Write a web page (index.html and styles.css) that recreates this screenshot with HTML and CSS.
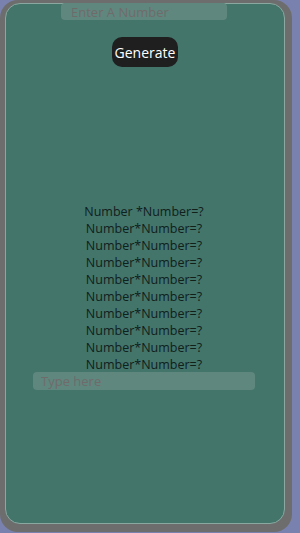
FILE: index.html
```html
<!DOCTYPE html>
<html lang="en">
<head>
    <meta charset="UTF-8">
    <meta name="viewport" content="width=device-width, initial-scale=1.0">
    <title>Multiplication</title>
    <link rel="stylesheet" href="styles.css">
</head>
<body>
    <div class="frame">
        <div class="panel">
            <input type="text" class="number-input" placeholder="Enter A Number">
            <button class="generate">Generate</button>
            <div class="questions">
                <p>Number *Number=?</p>
                <p>Number*Number=?</p>
                <p>Number*Number=?</p>
                <p>Number*Number=?</p>
                <p>Number*Number=?</p>
                <p>Number*Number=?</p>
                <p>Number*Number=?</p>
                <p>Number*Number=?</p>
                <p>Number*Number=?</p>
                <p>Number*Number=?</p>
            </div>
            <input type="text" class="answer-input" placeholder="Type here">
        </div>
    </div>
</body>
</html>
```

FILE: styles.css
```css
* {
    box-sizing: border-box;
    margin: 0;
    padding: 0;
}

body {
    font-family: "Open Sans", "Noto Sans", Arial, sans-serif;
    background-color: #7982ae;
    width: 300px;
    height: 533px;
    overflow: hidden;
}

.frame {
    width: 292px;
    height: 532px;
    background-color: #6d6d6d;
    border-radius: 18px;
    padding: 3px 7px 8px 5px;
}

.panel {
    height: 100%;
    background-color: #43756b;
    border: 1px solid #8aa8a0;
    border-radius: 15px;
    display: flex;
    flex-direction: column;
    align-items: center;
}

input {
    border: none;
    border-radius: 4px;
    background-color: #5f877e;
    font-family: inherit;
    font-size: 13px;
    color: #333;
    outline: none;
}

input::placeholder {
    color: #706b6b;
}

.number-input {
    width: 166px;
    height: 17px;
    margin-top: -1px;
    margin-left: -2px;
    padding: 0 10px;
}

.generate {
    margin-top: 17px;
    width: 66px;
    height: 30px;
    background-color: #1f1f1f;
    color: #fff;
    border: none;
    border-radius: 10px;
    font-family: inherit;
    font-size: 14px;
}

.questions {
    margin-top: 136px;
    text-align: center;
    color: #10201b;
    font-size: 12.5px;
    line-height: 17px;
    margin-left: -2px;
}

.answer-input {
    margin-top: -1px;
    margin-left: -2px;
    width: 222px;
    height: 18px;
    padding: 0 8px;
}
```
